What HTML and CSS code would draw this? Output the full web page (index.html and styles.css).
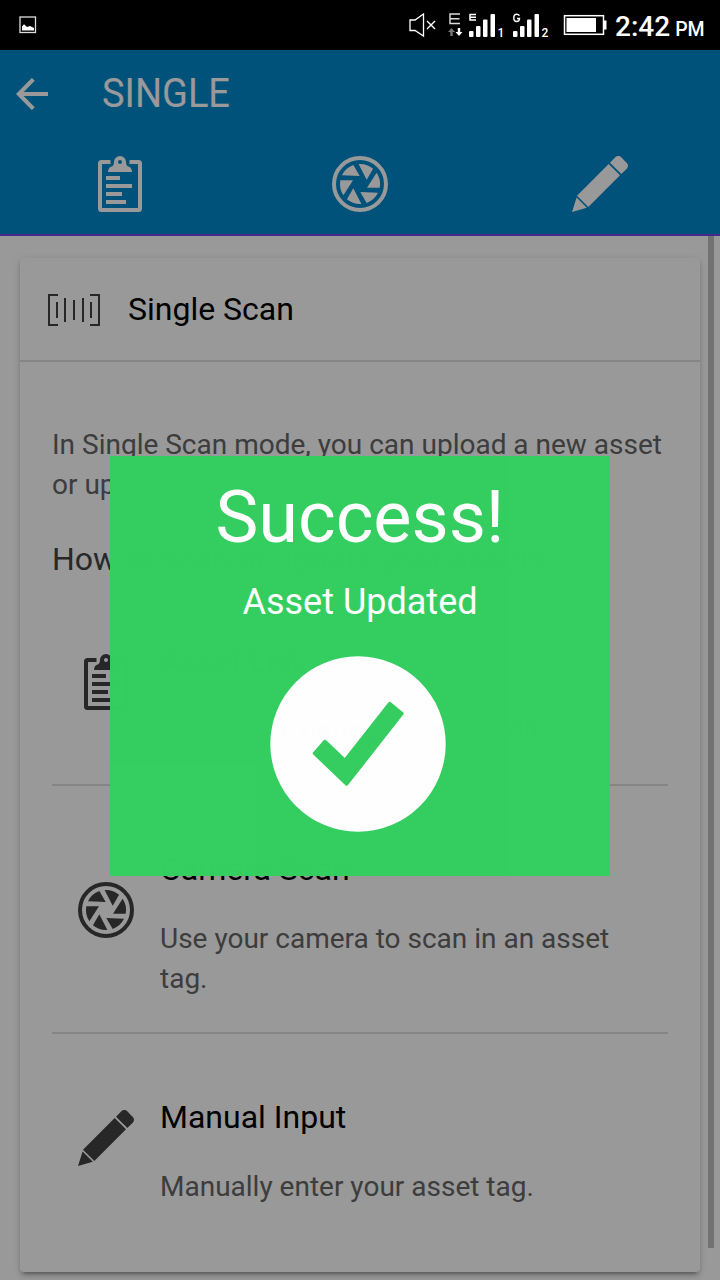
FILE: index.html
```html
<!DOCTYPE html>
<html lang="en">
<head>
<meta charset="utf-8">
<title>Single</title>
<link rel="stylesheet" href="styles.css">
</head>
<body>
<svg class="defs" width="0" height="0">
  <symbol id="clipboard" viewBox="0 0 56 56">
    <path fill="none" stroke="currentColor" stroke-width="4" d="M18.5 6H9.5Q8 6 8 7.5V52.5Q8 54 9.5 54H46.5Q48 54 48 52.5V7.5Q48 6 46.5 6H37.5"/>
    <path fill="currentColor" fill-rule="evenodd" d="M28 0A6 6 0 0 1 34 6Q34 10 37 10.7Q40 12 40 16H16Q16 12 19 10.7Q22 10 22 6A6 6 0 0 1 28 0ZM28 4A2 2 0 1 0 28 8A2 2 0 1 0 28 4Z"/>
    <path fill="currentColor" d="M14 20H28V24H14ZM14 28H40V32H14ZM14 36H30V40H14ZM14 44H34V48H14Z"/>
  </symbol>
  <symbol id="aperture" viewBox="-28 -28 56 56">
    <circle r="26" fill="none" stroke="currentColor" stroke-width="4"/>
    <g fill="currentColor">
      <path id="blade" d="M16.6-11.2A20 20 0 0 1 19.7 3.7L7 3.7Z"/>
      <use href="#blade" transform="rotate(60)"/>
      <use href="#blade" transform="rotate(120)"/>
      <use href="#blade" transform="rotate(180)"/>
      <use href="#blade" transform="rotate(240)"/>
      <use href="#blade" transform="rotate(300)"/>
    </g>
  </symbol>
  <symbol id="pencil" viewBox="0 0 56 56">
    <path fill="currentColor" d="M0 56L4.6 41.6L14.8 51.8ZM5 39.7L36.7 8L48 19.3L16.3 51ZM38 6.7L43.6 1.1Q46.3-1.2 49 1.1L55 7.2Q57 9.8 55 12.5L49.3 18Z"/>
  </symbol>
</svg>

<header class="status">
  <svg class="status-photo" width="18" height="18" viewBox="0 0 18 18">
    <rect x="1" y="1" width="15.5" height="15.5" fill="none" stroke="#ddd" stroke-width="1.3"/>
    <path fill="#fff" d="M3 14.5V10.5L5 8.3L8 11L11 10L15 12V14.5Z"/>
  </svg>
  <svg class="status-icons" width="200" height="50" viewBox="408 0 200 50">
    <path d="M410 20H415L423.5 14V36L415 30.5H410Z" fill="none" stroke="#fff" stroke-width="1.3"/>
    <path d="M427 21L435 29M435 21L427 29" stroke="#fff" stroke-width="1.4"/>
    <path d="M460 14H450V23.5H460M450 18.7H459.5" fill="none" stroke="#ddd" stroke-width="1.4"/>
    <path d="M451.5 28L455 32H452.7V36H450.3V32H448Z" fill="#777"/>
    <path d="M459 36L462.5 32H460.2V28H457.8V32H455.5Z" fill="#fff"/>
    <path d="M476 14.5H470V20H476M470 17.3H476" fill="none" stroke="#fff" stroke-width="1.5"/>
    <g id="signal" fill="#fff">
      <rect x="469" y="31" width="4.5" height="6" rx="1"/>
      <rect x="476" y="26" width="4.5" height="11" rx="1"/>
      <rect x="483" y="19.5" width="4.5" height="17.5" rx="1"/>
      <rect x="490.5" y="14" width="4.5" height="23" rx="1"/>
    </g>
    <use href="#signal" x="44"/>
    <path d="M519.5 15.7Q518.5 14.3 516.7 14.3Q513.8 14.3 513.8 18Q513.8 21.5 516.7 21.5Q519.5 21.5 519.5 18.5H517" fill="none" stroke="#fff" stroke-width="1.4"/>
    <text x="497.5" y="36.5" class="sim">1</text>
    <text x="541.5" y="36.5" class="sim">2</text>
    <rect x="564.5" y="15.7" width="39" height="18.6" fill="none" stroke="#fff" stroke-width="1.5"/>
    <path d="M566.5 18H596V32H566.5ZM604 20.5H606.5V29.5H604Z" fill="#fff"/>
  </svg>
  <div class="clock">2:42<span class="pm">PM</span></div>
</header>

<div class="app">
  <div class="toolbar">
    <div class="title-row">
      <svg class="back" width="32" height="32" viewBox="0 0 32 32"><path d="M17.3 1.3L2.8 16L17.3 30.7M2.8 16H32" fill="none" stroke="currentColor" stroke-width="4"/></svg>
      <h1>SINGLE</h1>
    </div>
    <nav class="tabs">
      <svg class="icon"><use href="#clipboard"/></svg>
      <svg class="icon"><use href="#aperture"/></svg>
      <svg class="icon"><use href="#pencil"/></svg>
    </nav>
  </div>

  <main class="content">
    <section class="card">
      <div class="card-head">
        <svg class="barcode" width="52" height="32" viewBox="0 0 52 32"><path d="M10 1H1V31H10M42 1H51V31H42M9 8V24M17 4V28M26 6V26M35 4V28M43 8V24" fill="none" stroke="#424242" stroke-width="2"/></svg>
        <h2>Single Scan</h2>
      </div>
      <div class="card-body">
        <p class="intro">In Single Scan mode, you can upload a new asset or update an existing asset.</p>
        <h3>How to scan or update your assets:</h3>
        <div class="row">
          <svg class="icon"><use href="#clipboard"/></svg>
          <div><h2>Asset List</h2><p>Select an existing asset to edit.</p></div>
        </div>
        <div class="row">
          <svg class="icon"><use href="#aperture"/></svg>
          <div><h2>Camera Scan</h2><p>Use your camera to scan in an asset tag.</p></div>
        </div>
        <div class="row">
          <svg class="icon"><use href="#pencil"/></svg>
          <div><h2>Manual Input</h2><p>Manually enter your asset tag.</p></div>
        </div>
      </div>
    </section>
    <div class="scrollbar"></div>
  </main>

  <div class="backdrop">
    <div class="modal">
      <div class="modal-title">Success!</div>
      <div class="modal-text">Asset Updated</div>
      <svg class="check" width="176" height="176" viewBox="270 656 176 176">
        <circle cx="358" cy="744" r="87.7" fill="#fff"/>
        <path d="M314.5 753.3L325 741.5L344.9 760.6L389.7 703.6L401.9 713.5L346.6 784Z" fill="#35ce60" stroke="#35ce60" stroke-width="3.5" stroke-linejoin="round"/>
      </svg>
    </div>
  </div>
</div>
</body>
</html>
```
FILE: styles.css
```css
* { box-sizing: border-box; margin: 0; padding: 0; }
body {
  width: 720px;
  height: 1280px;
  overflow: hidden;
  font-family: Roboto, "Liberation Sans", sans-serif;
  font-weight: 400;
  background: #000;
}
svg { display: block; flex: none; }
.defs { position: absolute; }
.status {
  height: 50px;
  display: flex;
  align-items: center;
  padding-left: 19px;
  color: #fff;
}
.status-icons { margin-left: 371px; }
.sim { font: 500 12px Roboto, sans-serif; fill: #fff; }
.clock {
  margin-left: 7px;
  padding-top: 6px;
  font-size: 28px;
  font-weight: 500;
  line-height: 34px;
  white-space: nowrap;
}
.pm { font-size: 19.5px; margin-left: 5px; }

.app { position: relative; height: 1230px; background: #fff; }
.toolbar {
  height: 186px;
  background: #0089cc;
  border-bottom: 2px solid #7047e8;
  color: #fff;
}
.title-row {
  height: 88px;
  display: flex;
  align-items: center;
  padding-left: 16px;
  gap: 54px;
}
h1 { font-size: 40px; font-weight: 400; line-height: 48px; transform-origin: left; transform: scaleX(.95); }
.tabs {
  display: grid;
  grid-template-columns: repeat(3, 1fr);
  justify-items: center;
  padding-top: 18px;
}
.icon { width: 56px; height: 56px; }
.content {
  display: flex;
  height: 1044px;
  padding: 22px 0 0 20px;
}
.card {
  width: 680px;
  height: 1014px;
  border-radius: 4px;
  background: #fff;
  box-shadow: 0 4px 4px rgba(0,0,0,.14), 0 6px 2px -4px rgba(0,0,0,.2), 0 2px 10px rgba(0,0,0,.12);
}
.scrollbar {
  width: 6px;
  height: 1012px;
  margin: -22px 0 0 8px;
  background: #bfbfbf;
}
.card-head {
  height: 104px;
  display: flex;
  align-items: center;
  gap: 28px;
  padding-left: 28px;
  border-bottom: 2px solid #dedede;
}
h2 { font-size: 32px; font-weight: 400; line-height: 38px; color: #000; }
.card-head h2 { margin-top: -1px; }
.barcode { margin-top: 2px; }
.card-body { padding: 63px 32px 0; }
p { font-size: 28px; line-height: 40px; color: #666; }
h3 { margin-top: 35px; font-size: 32px; font-weight: 400; line-height: 38px; color: #444; }
.row {
  height: 248px;
  display: flex;
  align-items: center;
  gap: 26px;
  padding-left: 26px;
  border-bottom: 2px solid #dedede;
  color: #424242;
}
h3 + .row { height: 208px; }
.row .icon { margin-top: 2px; }
.row:last-child { height: 208px; border: 0; }
.row:last-child .icon { margin-top: 0; }
.row > div { flex: 1; align-self: flex-start; padding: 64px 16px 0 0; }
.row p { margin-top: 31px; }

.backdrop {
  position: absolute;
  inset: 0;
  background: rgba(0,0,0,.4);
  padding: 406px 110px 0;
}
.modal {
  height: 420px;
  background: #34cf60;
  color: #fff;
  opacity: .993;
  display: flex;
  flex-direction: column;
  align-items: center;
  padding-top: 20px;
}
.modal-title { font-size: 72px; line-height: 84px; }
.modal-text { margin-top: 21px; font-size: 36px; line-height: 42px; }
.check { margin: 33px 4px 0 0; }
```
